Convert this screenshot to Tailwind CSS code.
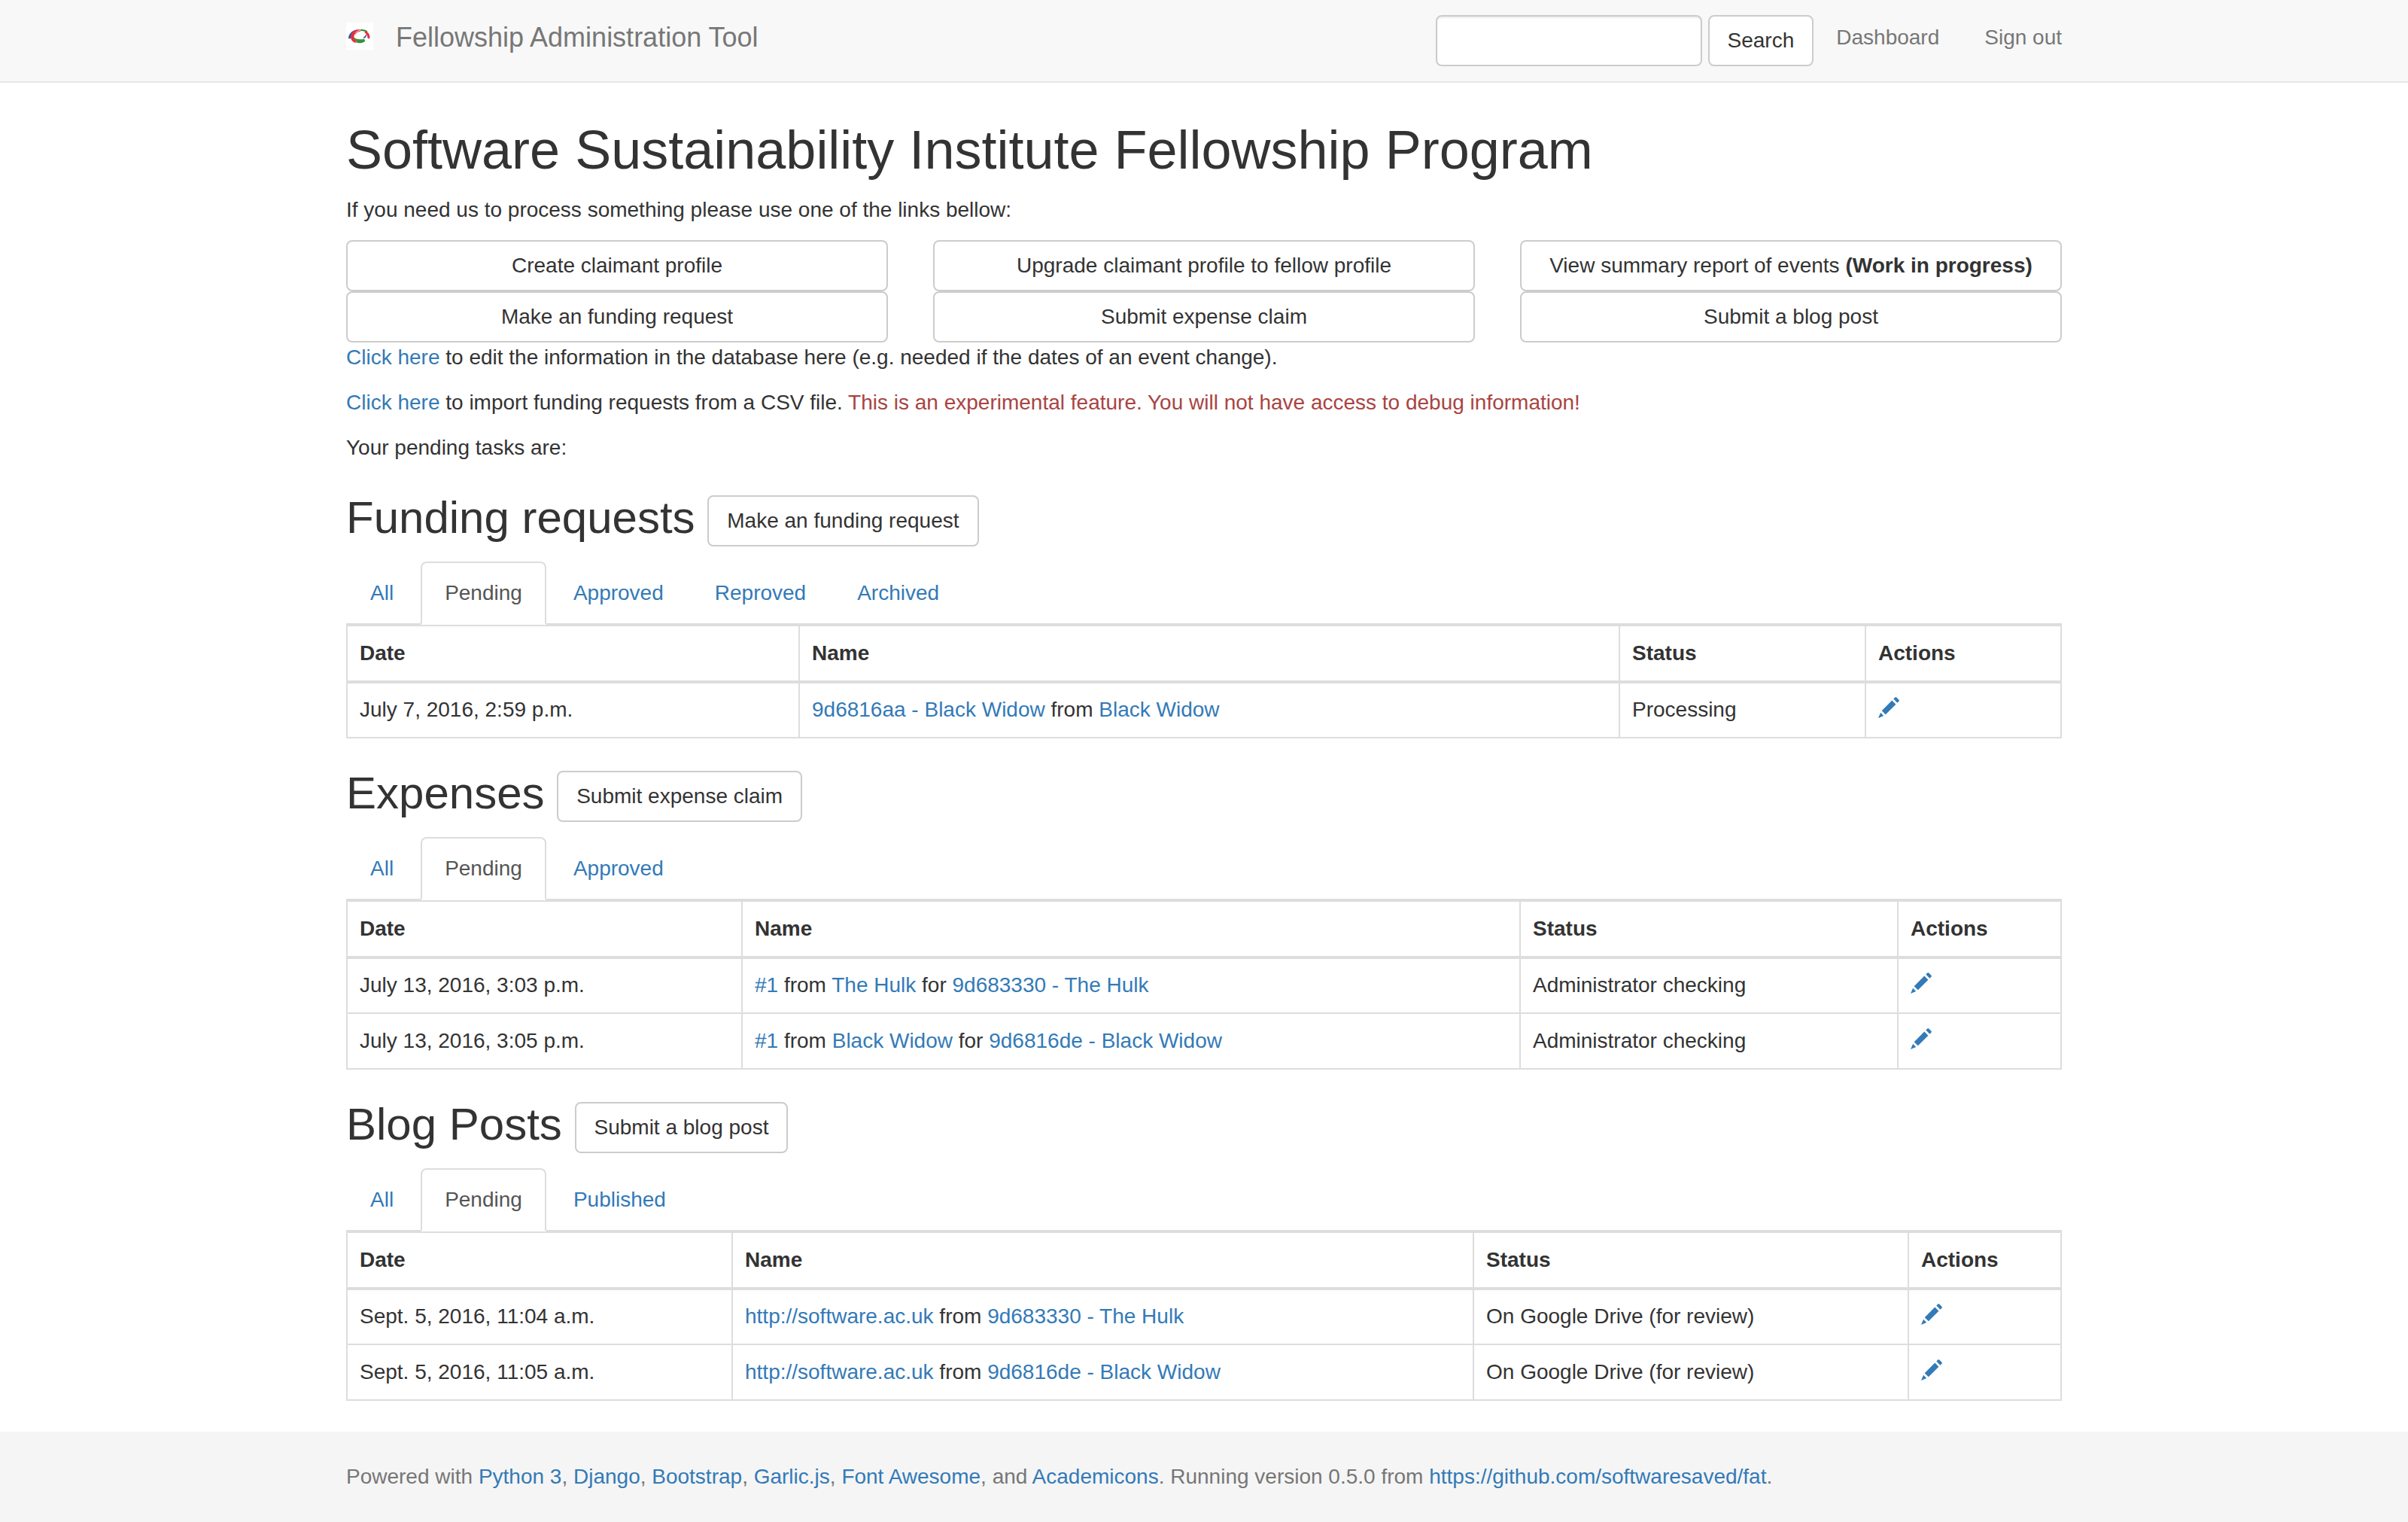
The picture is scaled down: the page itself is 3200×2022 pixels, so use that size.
<!DOCTYPE html>
<html lang="en">
<head>
<meta charset="utf-8">
<meta name="viewport" content="width=device-width, initial-scale=1">
<title>Fellowship Administration Tool</title>
<script src="https://cdn.jsdelivr.net/npm/@tailwindcss/browser@4"></script>
</head>
<body class="min-h-screen flex flex-col bg-white text-[#333] text-[28px] leading-10 font-['Liberation_Sans',Arial,sans-serif]">

<svg class="hidden" aria-hidden="true">
  <symbol id="pencil" viewBox="0 0 28 28">
    <path fill="currentColor" d="M22.3.6c.5-.6 1.300-.6 1.900 0l3.200 3.200c.6.6.6 1.400 0 1.900l-2 2-5.100-5.100zM18.300 4.600l5.100 5.100L9.800 23.300 4.700 18.200zM3.100 20.800l4.100 4.100L0 28z"/>
  </symbol>
</svg>

<nav class="bg-[#f8f8f8] border-b-2 border-[#e7e7e7]">
  <div class="max-w-[2340px] mx-auto px-[30px] flex items-start justify-between">
    <a href="#" class="flex items-start gap-[30px] py-[30px] text-[36px] leading-10 text-[#777]">
      <svg class="size-9 bg-white" viewBox="0 0 108 108" fill="none" aria-hidden="true">
        <path d="M9 64C9 46 22 32 44 28L44 32C29 37 20 48 18 64Z" fill="#2d5c9e"/>
        <path d="M55 27C34 27 19 38 18 55C17 67 25 77 36 81L43 74C33 68 29 59 33 49C36 39 44 32 55 31Z" fill="#e5303a"/>
        <path d="M35 48C38 40 46 35 57 34" stroke="#e5303a" stroke-width="3"/>
        <path d="M57 27C69 26 79 29 86 35L80 39C74 35 66 33 57 33Z" fill="#2f8b3c"/>
        <path d="M78 33C90 40 96 50 94 64L86 63C85 54 82 46 73 40Z" fill="#e5303a"/>
        <path d="M79 46C83 53 80 60 70 64L68 60C74 56 77 52 79 46Z" fill="#205fa6"/>
        <path d="M30 57C37 67 54 69 72 65L76 74C63 83 49 83 39 79L43 74C36 70 31 64 30 57Z" fill="#37913c"/>
      </svg>
      <span>Fellowship Administration Tool</span>
    </a>
    <div class="flex items-start">
      <form class="flex gap-2 py-5 pr-[30px]">
        <input type="text" aria-label="Search" class="w-[354px] h-[68px] px-6 bg-white border-2 border-[#ccc] rounded-lg shadow-[inset_0_2px_2px_rgba(0,0,0,0.075)]">
        <button type="button" class="h-[68px] px-6 bg-white border-2 border-[#ccc] rounded-lg">Search</button>
      </form>
      <div class="flex gap-[60px] py-[30px] text-[#777] leading-10">
        <a href="#">Dashboard</a>
        <a href="#">Sign out</a>
      </div>
    </div>
  </div>
</nav>

<main class="w-full max-w-[2340px] mx-auto px-[30px] pt-[50px] flex-1">
  <h1 class="text-[72px] leading-[79px] mb-5">Software Sustainability Institute Fellowship Program</h1>
  <p class="mb-5">If you need us to process something please use one of the links bellow:</p>
  <div class="grid grid-cols-3 gap-x-[60px] text-center">
    <a href="#" class="py-3 border-2 border-[#ccc] rounded-lg">Create claimant profile</a>
    <a href="#" class="py-3 border-2 border-[#ccc] rounded-lg">Upgrade claimant profile to fellow profile</a>
    <a href="#" class="py-3 border-2 border-[#ccc] rounded-lg">View summary report of events <strong>(Work in progress)</strong></a>
    <a href="#" class="py-3 border-2 border-[#ccc] rounded-lg">Make an funding request</a>
    <a href="#" class="py-3 border-2 border-[#ccc] rounded-lg">Submit expense claim</a>
    <a href="#" class="py-3 border-2 border-[#ccc] rounded-lg">Submit a blog post</a>
  </div>
  <p class="mb-5"><a href="#" class="text-[#337ab7]">Click here</a> to edit the information in the database here (e.g. needed if the dates of an event change).</p>
  <p class="mb-5"><a href="#" class="text-[#337ab7]">Click here</a> to import funding requests from a CSV file. <span class="text-[#a94442]">This is an experimental feature. You will not have access to debug information!</span></p>
  <p>Your pending tasks are:</p>

  <section class="mt-10">
    <h2 class="text-[60px] leading-[66px] mb-5">Funding requests <a href="#" class="inline-block align-middle px-6 py-3 text-[28px] leading-10 border-2 border-[#ccc] rounded-lg">Make an funding request</a></h2>
    <div class="flex gap-1 border-b-2 border-[#ddd] text-[#337ab7]">
      <a href="#" class="-mb-0.5 px-[30px] py-5 border-2 border-transparent">All</a>
      <a href="#" class="-mb-0.5 px-[30px] py-5 border-2 border-[#ddd] border-b-white rounded-t-lg bg-white text-[#555]">Pending</a>
      <a href="#" class="-mb-0.5 px-[30px] py-5 border-2 border-transparent">Approved</a>
      <a href="#" class="-mb-0.5 px-[30px] py-5 border-2 border-transparent">Reproved</a>
      <a href="#" class="-mb-0.5 px-[30px] py-5 border-2 border-transparent">Archived</a>
    </div>
    <table class="w-full table-fixed border-collapse border-2 border-[#ddd] text-left [&_th]:p-4 [&_th]:border-2 [&_th]:border-b-4 [&_th]:border-[#ddd] [&_td]:p-4 [&_td]:border-2 [&_td]:border-[#ddd] [&_tr:first-child_td]:pt-[15px] [&_a]:text-[#337ab7]">
      <colgroup><col class="w-[601px]"><col><col class="w-[327px]"><col class="w-[260px]"></colgroup>
      <thead><tr><th>Date</th><th>Name</th><th>Status</th><th>Actions</th></tr></thead>
      <tbody>
        <tr><td>July 7, 2016, 2:59 p.m.</td><td><a href="#">9d6816aa - Black Widow</a> from <a href="#">Black Widow</a></td><td>Processing</td><td><a href="#" aria-label="Edit"><svg class="inline-block size-7 align-[-2px]" aria-hidden="true"><use href="#pencil"/></svg></a></td></tr>
      </tbody>
    </table>
  </section>

  <section class="mt-10">
    <h2 class="text-[60px] leading-[66px] mb-5">Expenses <a href="#" class="inline-block align-middle px-6 py-3 text-[28px] leading-10 border-2 border-[#ccc] rounded-lg">Submit expense claim</a></h2>
    <div class="flex gap-1 border-b-2 border-[#ddd] text-[#337ab7]">
      <a href="#" class="-mb-0.5 px-[30px] py-5 border-2 border-transparent">All</a>
      <a href="#" class="-mb-0.5 px-[30px] py-5 border-2 border-[#ddd] border-b-white rounded-t-lg bg-white text-[#555]">Pending</a>
      <a href="#" class="-mb-0.5 px-[30px] py-5 border-2 border-transparent">Approved</a>
    </div>
    <table class="w-full table-fixed border-collapse border-2 border-[#ddd] text-left [&_th]:p-4 [&_th]:border-2 [&_th]:border-b-4 [&_th]:border-[#ddd] [&_td]:p-4 [&_td]:border-2 [&_td]:border-[#ddd] [&_tr:first-child_td]:pt-[15px] [&_a]:text-[#337ab7]">
      <colgroup><col class="w-[525px]"><col><col class="w-[502px]"><col class="w-[217px]"></colgroup>
      <thead><tr><th>Date</th><th>Name</th><th>Status</th><th>Actions</th></tr></thead>
      <tbody>
        <tr><td>July 13, 2016, 3:03 p.m.</td><td><a href="#">#1</a> from <a href="#">The Hulk</a> for <a href="#">9d683330 - The Hulk</a></td><td>Administrator checking</td><td><a href="#" aria-label="Edit"><svg class="inline-block size-7 align-[-2px]" aria-hidden="true"><use href="#pencil"/></svg></a></td></tr>
        <tr><td>July 13, 2016, 3:05 p.m.</td><td><a href="#">#1</a> from <a href="#">Black Widow</a> for <a href="#">9d6816de - Black Widow</a></td><td>Administrator checking</td><td><a href="#" aria-label="Edit"><svg class="inline-block size-7 align-[-2px]" aria-hidden="true"><use href="#pencil"/></svg></a></td></tr>
      </tbody>
    </table>
  </section>

  <section class="mt-10 mb-10">
    <h2 class="text-[60px] leading-[66px] mb-5">Blog Posts <a href="#" class="inline-block align-middle px-6 py-3 text-[28px] leading-10 border-2 border-[#ccc] rounded-lg">Submit a blog post</a></h2>
    <div class="flex gap-1 border-b-2 border-[#ddd] text-[#337ab7]">
      <a href="#" class="-mb-0.5 px-[30px] py-5 border-2 border-transparent">All</a>
      <a href="#" class="-mb-0.5 px-[30px] py-5 border-2 border-[#ddd] border-b-white rounded-t-lg bg-white text-[#555]">Pending</a>
      <a href="#" class="-mb-0.5 px-[30px] py-5 border-2 border-transparent">Published</a>
    </div>
    <table class="w-full table-fixed border-collapse border-2 border-[#ddd] text-left [&_th]:p-4 [&_th]:border-2 [&_th]:border-b-4 [&_th]:border-[#ddd] [&_td]:p-4 [&_td]:border-2 [&_td]:border-[#ddd] [&_tr:first-child_td]:pt-[15px] [&_a]:text-[#337ab7]">
      <colgroup><col class="w-[512px]"><col><col class="w-[578px]"><col class="w-[203px]"></colgroup>
      <thead><tr><th>Date</th><th>Name</th><th>Status</th><th>Actions</th></tr></thead>
      <tbody>
        <tr><td>Sept. 5, 2016, 11:04 a.m.</td><td><a href="#">http://software.ac.uk</a> from <a href="#">9d683330 - The Hulk</a></td><td>On Google Drive (for review)</td><td><a href="#" aria-label="Edit"><svg class="inline-block size-7 align-[-2px]" aria-hidden="true"><use href="#pencil"/></svg></a></td></tr>
        <tr><td>Sept. 5, 2016, 11:05 a.m.</td><td><a href="#">http://software.ac.uk</a> from <a href="#">9d6816de - Black Widow</a></td><td>On Google Drive (for review)</td><td><a href="#" aria-label="Edit"><svg class="inline-block size-7 align-[-2px]" aria-hidden="true"><use href="#pencil"/></svg></a></td></tr>
      </tbody>
    </table>
  </section>
</main>

<footer class="bg-[#f5f5f5] text-[#777]">
  <p class="max-w-[2340px] mx-auto px-[30px] py-10 [&_a]:text-[#337ab7]">Powered with <a href="#">Python 3</a>, <a href="#">Django</a>, <a href="#">Bootstrap</a>, <a href="#">Garlic.js</a>, <a href="#">Font Awesome</a>, and <a href="#">Academicons</a>. Running version 0.5.0 from <a href="#">https://github.com/softwaresaved/fat</a>.</p>
</footer>
</body>
</html>
